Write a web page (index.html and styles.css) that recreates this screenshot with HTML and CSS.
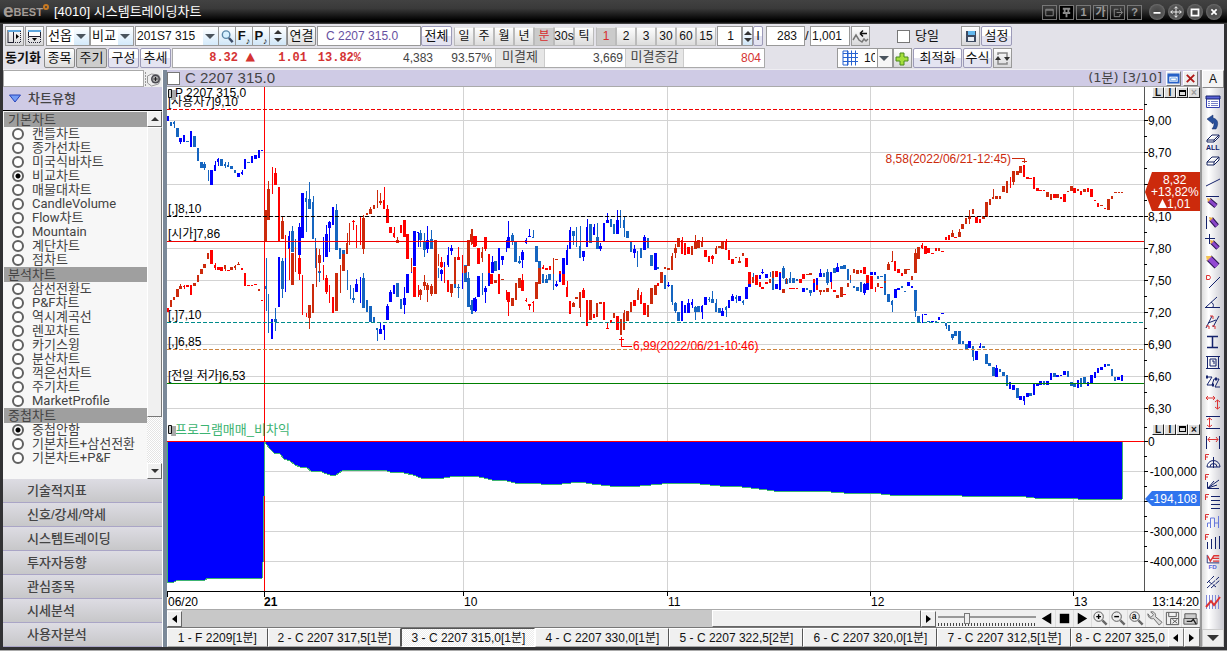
FILE: index.html
```html
<!DOCTYPE html>
<html lang="ko">
<head>
<meta charset="utf-8">
<title>[4010] 시스템트레이딩차트</title>
<link rel="stylesheet" href="styles.css">
</head>
<body>
<div class="window">
<header class="titlebar">
  <span class="brand"><b class="brand-e">e</b>BEST<i class="brand-dot"></i></span>
  <h1>[4010] 시스템트레이딩차트</h1>
  <div class="sysbtns">
    <button aria-label="창"><svg viewBox="0 0 14 14"><path d="M3 3.5h8v7H3zM3 4.5h8"/></svg></button>
    <button aria-label="고정" class="dark"><svg viewBox="0 0 14 14"><path d="M3 3h8M3 7.500h8M5 3v4M9 3v4M7 7v5" stroke-width="2"/></svg></button>
    <button>1</button><button>가</button>
    <button aria-label="내보내기"><svg viewBox="0 0 14 14"><path d="M8 3.500H3.500v8H9.500V9M6 7h6M10 4.500L12.500 7L10 9.500M10.500 2v3"/></svg></button>
    <button>?</button>
  </div>
  <div class="winbtns">
    <button aria-label="최소화"><svg viewBox="0 0 16 16"><path d="M4 9h8" stroke-width="2"/></svg></button>
    <button aria-label="이동"><svg viewBox="0 0 16 16"><path d="M8 2v12M2 8h12M6 4l2-2 2 2M6 12l2 2 2-2M4 6L2 8l2 2M12 6l2 2-2 2"/></svg></button>
    <button aria-label="최대화"><svg viewBox="0 0 16 16"><path d="M4 5h8v7H4z" stroke-width="2"/></svg></button>
    <button aria-label="닫기"><svg viewBox="0 0 16 16"><path d="M5 5l6 6M11 5l-6 6" stroke-width="2"/></svg></button>
  </div>
</header>

<section class="toolbars">
  <div class="bar">
    <button class="icon" aria-label="왼쪽 패널"><svg viewBox="0 0 17 17"><path d="M2 2.500h13M2 2v13M2 14.500h6M7.500 3v11" stroke="#223" /><path d="M2 2h13v2H2z" fill="#5fa8df"/><path d="M9 14.500h6M14.500 3v12" stroke="#223" stroke-dasharray="1 1"/><path d="M10 6l3 2.500-3 2.500z"/></svg></button>
    <button class="icon" aria-label="위쪽 패널"><svg viewBox="0 0 17 17"><path d="M2.500 2.500h12v6h-12z" stroke="#223" fill="#fff"/><path d="M2 2h13v2H2z" fill="#5fa8df"/><path d="M2.500 9v5.500h12V9" stroke="#223" fill="none" stroke-dasharray="1 1"/><path d="M6 10h5l-2.500 3z"/></svg></button>
    <span class="combo combo-first"><select aria-label="상품"><option>선옵</option></select></span>
    <span class="combo"><select aria-label="차트"><option>비교</option></select></span>
    <span class="combo combo-code"><select aria-label="종목코드"><option>201S7 315</option></select></span>
    <button class="sky" aria-label="검색"><svg viewBox="0 0 16 18"><circle cx="6.500" cy="7" r="4" fill="#d6f0ff" stroke="#5b87a8" stroke-width="1.500"/><path d="M9.500 10.500l4 4.500" stroke="#3c4b66" stroke-width="2.500"/></svg></button>
    <button class="sky letter">F<small>♪</small></button>
    <button class="sky letter">P<small>♪</small></button>
    <button class="sky updown" aria-label="위아래"><i class="up"></i><i class="down"></i></button>
    <button class="btn grey-edge w29">연결</button>
    <input class="field name" aria-label="종목명" value="C 2207 315.0">
    <button class="btn w31">전체</button>
    <div class="group">
      <button>일</button><button>주</button><button>월</button><button>년</button><button class="on">분</button><button>30s</button><button>틱</button>
    </div>
    <div class="group nums">
      <button class="on">1</button><button>2</button><button>3</button><button>30</button><button>60</button><button>15</button>
    </div>
    <input class="field num1" aria-label="주기" value="1">
    <button class="sky updown narrow" aria-label="주기 조절"><i class="up"></i><i class="down"></i></button>
    <button class="btn tiny">I</button>
    <input class="field num2" aria-label="조회" value="283"><span class="slash">/</span><input class="field num3" aria-label="전체" value="1,001">
    <button class="icon" aria-label="연장"><svg viewBox="0 0 17 17"><path d="M1 12l3-5 3 5 3 2 2-3 2 2 2-2" fill="none" stroke="#777" stroke-width="1.500"/><path d="M8 5.500h7M8 5.500l3-3M8 5.500l3 3" stroke="#111" fill="none" stroke-width="1.500"/></svg></button>
    <label class="check"><input type="checkbox">당일</label>
    <button class="icon" aria-label="저장"><svg viewBox="0 0 17 17"><path d="M4 3h10v11H4z" fill="#3d4a60"/><path d="M6 3h7v4H6z" fill="#62b8ed"/><path d="M6 9h6v4H6z" fill="#e8edf3"/></svg></button>
    <button class="btn w31">설정</button>
  </div>
  <div class="bar">
    <strong class="sync">동기화</strong>
    <button class="btn grey-edge w31">종목</button><button class="btn pressed w31">주기</button><button class="btn w31">구성</button><button class="btn w31">추세</button>
    <div class="quote">
      <b class="q-price">8.32</b><b class="q-tri">▲</b><b class="q-diff">1.01</b><b class="q-rate">13.82%</b>
      <span class="q-vol">4,383</span><span class="q-pct">93.57%</span><span class="q-head oi">미결제</span><span class="q-oi">3,669</span><span class="q-head">미결증감</span><span class="q-chg">804</span>
    </div>
    <span class="combo gridbox"><svg viewBox="0 0 16 16"><path d="M1 1h5v14H1z" fill="#fff" stroke="#2862d0"/><path d="M5.500.5v15M9.500.5v15M13.500.5v15M1 3.500h15M1 7.500h15M1 11.500h15" stroke="#2862d0" fill="none"/></svg><select aria-label="격자"><option>10</option></select></span>
    <button class="icon plus" aria-label="추가"><svg viewBox="0 0 17 17"><path d="M6 3h4v4h4v4h-4v4H6v-4H2V7h4z" fill="#a5df3c" stroke="#4a8a1d"/></svg></button>
    <button class="btn w48">최적화</button><button class="btn w29">수식</button>
    <button class="icon" aria-label="새로고침"><svg viewBox="0 0 17 17"><path d="M4 5V3h9v6M4 9v5h9v-2" fill="none" stroke="#888" stroke-width="1.500"/><path d="M10 7h6l-3 4zM1 10h6L4 6z" fill="#333"/></svg></button>
  </div>
</section>

<main class="workspace">
<aside class="sidebar">
  <div class="search"><input aria-label="차트 검색"><button aria-label="찾기"><svg viewBox="0 0 17 16"><path d="M1 1v14" stroke="#999" stroke-dasharray="2 1"/><path d="M3 5l4-2 7 1 2 4-2 5-7 2-4-3z" fill="#eee" stroke="#999"/><circle cx="11" cy="8" r="4.500" fill="#4a4a50"/><circle cx="11" cy="8" r="3" fill="#aaa"/><path d="M11 6v4M9 8h4" stroke="#222"/></svg></button></div>
  <h2 class="open"><svg viewBox="0 0 12 9"><path d="M.5 1h11L6 8z" fill="#739cf5" stroke="#2742b8"/></svg>차트유형</h2>
  <div class="list-wrap">
    <div class="list">
      <h3>기본차트</h3>
      <label><input type="radio" name="basic">캔들차트</label>
      <label><input type="radio" name="basic">종가선차트</label>
      <label><input type="radio" name="basic">미국식바차트</label>
      <label><input type="radio" name="basic" checked>비교차트</label>
      <label><input type="radio" name="basic">매물대차트</label>
      <label><input type="radio" name="basic">CandleVolume</label>
      <label><input type="radio" name="basic">Flow차트</label>
      <label><input type="radio" name="basic">Mountain</label>
      <label><input type="radio" name="basic">계단차트</label>
      <label><input type="radio" name="basic">점차트</label>
      <h3>분석차트</h3>
      <label><input type="radio" name="basic">삼선전환도</label>
      <label><input type="radio" name="basic">P&amp;F차트</label>
      <label><input type="radio" name="basic">역시계곡선</label>
      <label><input type="radio" name="basic">렌꼬차트</label>
      <label><input type="radio" name="basic">카기스윙</label>
      <label><input type="radio" name="basic">분산차트</label>
      <label><input type="radio" name="basic">꺽은선차트</label>
      <label><input type="radio" name="basic">주기차트</label>
      <label><input type="radio" name="basic">MarketProfile</label>
      <h3>중첩차트</h3>
      <label><input type="radio" name="overlay" checked>중첩안함</label>
      <label><input type="radio" name="overlay">기본차트+삼선전환</label>
      <label><input type="radio" name="overlay">기본차트+P&amp;F</label>
    </div>
    <div class="vscroll"><button aria-label="위로"><i class="up"></i></button><span class="vthumb"></span><button aria-label="아래로"><i class="down"></i></button></div>
  </div>
  <nav class="sections">
    <button>기술적지표</button><button>신호/강세/약세</button><button>시스템트레이딩</button><button>투자자동향</button><button>관심종목</button><button>시세분석</button><button>사용자분석</button>
  </nav>
</aside>

<section class="chart">
  <div class="chart-head">
    <input type="checkbox" aria-label="선택"><h2>C 2207 315.0</h2><span class="count">(1분) [3/10]</span>
    <button aria-label="창 크기"><svg viewBox="0 0 14 14"><path d="M1.500 2.500h11v9h-11z" fill="#fff" stroke="#2862c8" stroke-width="2"/><path d="M1 4h12" stroke="#2862c8" stroke-width="2"/><path d="M4 6.500h6v3H4z" fill="none" stroke="#6aa2e6"/></svg></button>
    <button aria-label="닫기"><svg viewBox="0 0 14 14"><path d="M3 3l8 8M11 3l-8 8" stroke="#b01818" stroke-width="2"/></svg></button>
  </div>
  <div class="plot">
    <svg class="plot-svg" viewBox="167 87 1033 522" preserveAspectRatio="xMinYMin meet">
      <g stroke="#d3d3d3" shape-rendering="crispEdges">
        <path d="M167 120.500H1144M167 152.500H1144M167 184.500H1144M167 216.500H1144M167 248.500H1144M167 280.500H1144M167 312.500H1144M167 344.500H1144M167 376.500H1144M167 408.500H1144M167 471.500H1144M167 501.500H1144M167 531.500H1144M167 561.500H1144"/>
        <path d="M463.500 87V591M667.500 87V591M870.500 87V591M1073.500 87V591"/>
      </g>
      <path d="M264.500 87V591" stroke="#f00" shape-rendering="crispEdges"/>
      <g id="candles" shape-rendering="crispEdges"></g>
      <g shape-rendering="crispEdges">
        <path d="M167 109.500H1144" stroke="#f00000" stroke-dasharray="4 2"/>
        <path d="M167 216.500H1144" stroke="#000" stroke-dasharray="4 2"/>
        <path d="M167 241.500H1144" stroke="#f00000"/>
        <path d="M167 322.500H1144" stroke="#008b8b" stroke-dasharray="4 2"/>
        <path d="M167 349.500H1144" stroke="#cd853f" stroke-dasharray="4 2"/>
        <path d="M167 383.500H1144" stroke="#008000"/>
      </g>
      <path fill="#00f" stroke="#3cb371" shape-rendering="crispEdges" d="M167 441V582L174 582 178 580H199L201 581 205 580 208 578H262L263.500 555 264.500 441 266 444 270 449 274 453 280 454 284 459 290 461 295 465 300 467 307 468 311 471H320L324 473 330 475 336 475 342 471 352 470H384L390 472 404 473 413 475 421 478H444L456 476H474L484 478 492 480 507 481 515 483 530 483 541 484H562L580 482 592 484 610 486 640 486 662 484 682 483 700 484 720 486 742 487 759 489 774 491H818L844 493H872L890 495H934L962 496H1018L1034 498 1078 499 1104 500 1122 499V441z"/>
      <path d="M167 441.500H1144" stroke="#f00" shape-rendering="crispEdges"/>
      <g stroke="#000" shape-rendering="crispEdges">
        <path d="M1144.500 87V591" stroke="#555"/>
        <path d="M167 591.500H1200M167.500 591V597M264.500 591V597M463.500 591V596M667.500 591V596M870.500 591V596M1073.500 591V596"/>
        <path d="M1144 104.500h3M1144 120.500h4M1144 136.500h3M1144 152.500h4M1144 168.500h3M1144 184.500h4M1144 200.500h3M1144 216.500h4M1144 232.500h3M1144 248.500h4M1144 264.500h3M1144 280.500h4M1144 296.500h3M1144 312.500h4M1144 328.500h3M1144 344.500h4M1144 360.500h3M1144 376.500h4M1144 392.500h3M1144 408.500h4M1144 427.500h3M1144 441.500h4M1144 456.500h3M1144 471.500h4M1144 486.500h3M1144 501.500h4M1144 516.500h3M1144 531.500h4M1144 546.500h3M1144 561.500h4"/>
      </g>
      <g class="t">
        <text x="175" y="97">P 2207 315,0</text><text x="168" y="106">[사용자7]9,10</text>
        <text x="168" y="213">[,]8,10</text><text x="168" y="238">[시가]7,86</text><text x="168" y="319">[,]7,10</text><text x="168" y="346">[,]6,85</text><text x="168" y="380">[전일 저가]6,53</text>
        <text x="1148" y="125">9,00</text><text x="1148" y="157">8,70</text><text x="1148" y="221">8,10</text><text x="1148" y="253">7,80</text><text x="1148" y="285">7,50</text><text x="1148" y="317">7,20</text><text x="1148" y="349">6,90</text><text x="1148" y="381">6,60</text><text x="1148" y="413">6,30</text>
        <text x="1148" y="446">0</text>
        <g text-anchor="end"><text x="1197" y="476">-100,000</text><text x="1197" y="536">-300,000</text><text x="1197" y="566">-400,000</text><text x="1199" y="606">13:14:20</text></g>
        <text x="168" y="606">06/20</text><text x="264" y="606" font-weight="bold">21</text><text x="464" y="606">10</text><text x="668" y="606">11</text><text x="871" y="606">12</text><text x="1074" y="606">13</text>
        <text x="175" y="434" fill="#3cb371" class="ind">프로그램매매_비차익</text>
        <text x="633" y="350" fill="#f00">6,99(2022/06/21-10:46)</text><text x="1011" y="163" fill="#cc2a0c" text-anchor="end">8,58(2022/06/21-12:45)</text>
      </g>
      <path d="M621.500 337V346.500H632M619 339.500h5" stroke="#f00" fill="none"/><path d="M1012 158.500H1024.500V163M1022 161.500h5" stroke="#cc2a0c" fill="none"/>
      <path d="M172 90h4v10h-5z" fill="#aaa"/><path d="M168.500 89.500h3v8h-3z" fill="#ccc" stroke="#111"/>
      <path d="M172 426h4v10h-5z" fill="#aaa"/><path d="M168.500 425.500h3v8h-3z" fill="#ccc" stroke="#111"/>
      <path d="M1145 192L1152 172H1200V211H1152z" fill="#cc2a0c"/><path d="M1145 499L1152 491H1200V506H1152z" fill="#2f74ee"/>
      <g class="t"><text x="1163" y="184" fill="#fff">8,32</text><text x="1151" y="196" fill="#fff">+13,82%</text><text x="1167" y="208" fill="#fff">1,01</text><text x="1197" y="503" text-anchor="end" fill="#fff">-194,108</text></g>
      <path d="M1158 208l4.500-9 4.500 9z" fill="#fff"/>
    </svg>
    <div class="pane-btns upper"><button>L</button><button>I</button><button aria-label="최대화"><i class="box"></i></button><button class="off">×</button></div>
    <div class="pane-btns lower"><button>L</button><button>I</button><button aria-label="최대화"><i class="box"></i></button><button>×</button></div>
  </div>
  <div class="scrollrow">
    <button class="raised" aria-label="왼쪽"><i class="left"></i></button><span class="track"></span><span class="hthumb"></span><button class="raised" aria-label="오른쪽"><i class="right"></i></button>
    <input type="range" aria-label="확대 비율" min="0" max="100" value="28">
    <div class="playback">
      <button aria-label="뒤로"><svg viewBox="0 0 18 18"><path d="M14 3v12L4 9z"/></svg></button><button aria-label="정지"><svg viewBox="0 0 18 18"><path d="M4 4h10v10H4z"/></svg></button><button aria-label="재생"><svg viewBox="0 0 18 18"><path d="M4 3v12l10-6z"/></svg></button>
      <button aria-label="확대"><svg viewBox="0 0 18 18"><circle cx="7" cy="7" r="5" fill="#eee" stroke="#555"/><path d="M4.500 7h5M7 4.500v5" stroke="#000" stroke-width="1.500"/><path d="M11 11l4.500 4.500" stroke="#666" stroke-width="2.500"/></svg></button>
      <button aria-label="축소"><svg viewBox="0 0 18 18"><circle cx="7" cy="7" r="5" fill="#eee" stroke="#555"/><path d="M4.500 7h5" stroke="#000" stroke-width="1.500"/><path d="M11 11l4.500 4.500" stroke="#666" stroke-width="2.500"/></svg></button>
      <button aria-label="전체 보기"><svg viewBox="0 0 18 18"><circle cx="7" cy="7" r="5" fill="#eee" stroke="#555"/><text x="4" y="10" font-size="9" font-weight="bold" font-family="Liberation Sans">a</text><path d="M11 11l4.500 4.500" stroke="#666" stroke-width="2.500"/></svg></button>
      <button aria-label="도구"><svg viewBox="0 0 18 18"><path d="M2 4c0 4 3 6 6 5l6 7 3-3-7-6c1-3-2-6-5-5l3 3-3 3z" fill="#ddd" stroke="#666"/></svg></button>
      <button aria-label="저장"><svg viewBox="0 0 18 18"><path d="M2.500 2.500h13v13h-13zM5 3v4h8V3M7 15V9h8M9 10l5 4M14 10l-5 4" fill="none" stroke="#555"/></svg></button>
      <button aria-label="인쇄"><svg viewBox="0 0 18 18"><path d="M3 4h12v5H3zM2 9h14v6H2z" fill="#ccc" stroke="#555"/><path d="M5 12h5l2-2 3 5" fill="none" stroke="#222" stroke-width="1.500"/></svg></button>
    </div>
  </div>
  <div class="tabs">
    <button class="first">1 - F 2209[1분]</button><button>2 - C 2207 317,5[1분]</button><button class="active">3 - C 2207 315,0[1분]</button><button>4 - C 2207 330,0[1분]</button><button>5 - C 2207 322,5[2분]</button><button>6 - C 2207 320,0[1분]</button><button>7 - C 2207 312,5[1분]</button><button class="last">8 - C 2207 325,0</button>
    <button class="arrow" aria-label="이전"><i class="left"></i></button><button class="arrow" aria-label="다음"><i class="right"></i></button>
  </div>
</section>

<div class="tools">
  <button class="a">A</button>
  <button aria-label="목록"><svg viewBox="0 0 16 16"><path d="M1.500 2.500h13v11h-13z" fill="#fff" stroke="#3540b0"/><path d="M1 2h14v3H1z" fill="#5961d8"/><path d="M3 7.500h2M3 9.500h2M3 11.500h2M6 7.500h7M6 9.500h7M6 11.500h7" stroke="#7780c8"/></svg></button>
  <button aria-label="되돌리기"><svg viewBox="0 0 16 16"><path d="M2 5l6-4v3c5 1 6 6 3 11H7c3-4 2-6 1-7v2z" fill="#29509b" stroke="#172b64" stroke-width=".5"/></svg></button>
  <button aria-label="모두 지우기"><svg viewBox="0 0 16 16"><path d="M2 6l5-5h7v2L9 8H2zM2 6h7l5-5M9 6v2" fill="#fff" stroke="#14225e"/><text x="1" y="16" font-size="7" font-weight="bold" fill="#14226b" font-family="Liberation Sans">ALL</text></svg></button>
  <button aria-label="지우기"><svg viewBox="0 0 16 16"><path d="M2 8l5-5h7v3l-5 5H2zM2 8h7l5-5M9 8v3" fill="#fff" stroke="#14225e"/></svg></button>
  <button aria-label="추세선"><svg viewBox="0 0 16 16"><path d="M1 12L15 5"/></svg></button>
  <button aria-label="수평선"><svg viewBox="0 0 16 16"><path d="M1 2.500h13"/><path d="M4 6l7 6" stroke="#28134f" stroke-width="5"/><path d="M4 6l7 6" stroke="#8a45c8" stroke-width="3"/><path d="M2 4l4 1-3 3z" fill="#f0b040" stroke="none"/></svg></button>
  <button aria-label="수직선"><svg viewBox="0 0 16 16"><path d="M1.500 2v13"/><path d="M6 5l6 7" stroke="#28134f" stroke-width="5"/><path d="M6 5l6 7" stroke="#8a45c8" stroke-width="3"/><path d="M4 3l4 1-3 3z" fill="#f0b040" stroke="none"/></svg></button>
  <button aria-label="십자선"><svg viewBox="0 0 16 16"><path d="M0 4.500h10M4.500 0v10"/><path d="M7 8l6 6" stroke="#28134f" stroke-width="5"/><path d="M7 8l6 6" stroke="#8a45c8" stroke-width="3"/><path d="M5 6l4 1-3 3z" fill="#f0b040" stroke="none"/></svg></button>
  <button aria-label="연필"><svg viewBox="0 0 16 16"><path d="M4 4l8 8" stroke="#28134f" stroke-width="7"/><path d="M4 4l8 8" stroke="#9347d2" stroke-width="5"/><path d="M1 2h6L2 7z" fill="#f5c452" stroke="none"/></svg></button>
  <button aria-label="직선"><svg viewBox="0 0 16 16"><path d="M4 14L15 3"/><path d="M1.500 1.500h3l1 2-1 2h-3z" stroke="#d33"/></svg></button>
  <button aria-label="각도"><svg viewBox="0 0 16 16"><path d="M0 13.500h15M1 13L12 3M6 8c2 1 3 3 2 5"/></svg></button>
  <button aria-label="평행선"><svg viewBox="0 0 16 16"><path d="M1 14L7 2M8 13l6-11M3 9l8-3"/><path d="M5 2h3v3M1 12h3v3M7 12h3v3" stroke="#d33"/></svg></button>
  <button aria-label="간격"><svg viewBox="0 0 16 16"><path d="M2 2.500h11M2 13.500h11M7.500 2v12" stroke-width="1.500"/></svg></button>
  <button aria-label="사각형"><svg viewBox="0 0 16 16"><path d="M1 2.500h14M1 14.500h14M2.500 2v12M13.500 2v12M5 5h6v7H5zM7 7h2v3"/></svg></button>
  <button aria-label="파동"><svg viewBox="0 0 16 16"><path d="M1 3h6L2 11h5l2-6h5l-4 8h5"/><path d="M1 3h2M10 5h2M7 11h2" stroke-width="3"/></svg></button>
  <button class="red" aria-label="화살표"><svg viewBox="0 0 16 16"><path d="M1 4h9M3 2L1 4l2 2M8 2l2 2-2 2M12.500 6v9M10 8l2.500-2L15 8M10 13l2.500 2 2.500-2"/></svg></button>
  <button aria-label="높이"><svg viewBox="0 0 16 16"><path d="M1 2.500h14M1 14.500h14"/><path d="M4.500 4v9M2 6l2.500-2L7 6M2 11l2.500 2L7 11" stroke="#d33"/></svg></button>
  <button aria-label="너비"><svg viewBox="0 0 16 16"><path d="M1.500 2v13M14.500 2v13"/><path d="M3 5.500h10M5 3L3 5.500 5 8M11 3l2 2.500L11 8" stroke="#d33"/></svg></button>
  <button aria-label="피보나치 원"><svg viewBox="0 0 16 16"><path d="M2 13a6 6 0 0 1 13 0zM5 13a3 3 0 0 1 7 0M8.500 3v11"/><path d="M.5 6V.5H4M.5 3H3" stroke="#d33"/></svg></button>
  <button aria-label="피보나치 팬"><svg viewBox="0 0 16 16"><path d="M2.500 8v6.500H14M3 14l11-8M3 14l9-3M3 14l6-7"/><path d="M.5 6V.5H4M.5 3H3" stroke="#d33"/></svg></button>
  <button aria-label="피보나치 되돌림"><svg viewBox="0 0 16 16"><path d="M6 2.500h9M6 6.500h9M6 10.500h9M6 14.500h9"/><path d="M.5 6V.5H4M.5 3H3" stroke="#d33"/></svg></button>
  <button aria-label="피보나치 파동"><svg viewBox="0 0 16 16"><path d="M2.500 13V9h3v5M5.500 12V4h4v9M9.500 9h4v5M13.500 9V2" stroke="#6678dc"/><path d="M.5 6V.5H4M.5 3H3" stroke="#d33"/></svg></button>
  <button aria-label="피보나치 시간"><svg viewBox="0 0 16 16"><path d="M2.500 8v7M6.500 5v10M10.500 3v12M14.500 2v13"/><path d="M.5 6V.5H4M.5 3H3" stroke="#d33"/></svg></button>
  <button aria-label="FD"><svg viewBox="0 0 16 18"><path d="M1.500 1v9H15"/><path d="M2 2l3 6 4-6h6M8 5h7M8 8h7" stroke="#d33" stroke-width="1.500"/><text x="3" y="17" font-size="7" fill="#5565dd" font-family="Liberation Sans" font-weight="bold">FD</text></svg></button>
  <button aria-label="채널"><svg viewBox="0 0 16 16"><path d="M2 9L9 2M2 14L14 3M6 14l9-8M3 7l8 6" stroke-dasharray="5 1"/></svg></button>
  <button aria-label="추세 파동"><svg viewBox="0 0 16 16"><path d="M1.500 1v14M4.500 1v14M7.500 1v14M10.500 1v14M13.500 1v14" stroke="#8088d8"/><path d="M1 13l5-6 3 4 6-8" stroke="#d33" stroke-width="2"/></svg></button>
  <button class="more" aria-label="더 보기"><i class="down"></i></button>
</div>
</main>
</div>
<script src="chart.js"></script>
</body>
</html>
```
FILE: styles.css
```css
* { box-sizing: border-box; }
html, body { height: 100%; }
body { margin: 0; font: 13px/16px "Liberation Sans", "Noto Sans CJK KR", sans-serif; color: #111; overflow: hidden; }
button, input, select { font: inherit; color: inherit; margin: 0; padding: 0; border-radius: 0; }
button { display: flex; align-items: center; justify-content: center; white-space: nowrap; border: 0; background: none; }
h1, h2, h3 { margin: 0; font-size: 13px; font-weight: normal; }
svg { display: block; }
.window { height: 100vh; display: flex; flex-direction: column; padding: 0 3px 3px; background: #323234; border-bottom: 1px solid #aaa; }

.titlebar { flex: none; height: 24px; margin: 0 -3px; padding: 0 5px 0 3px; display: flex; align-items: center; background: linear-gradient(#424242 0, #3a3a3a 35%, #000 85%, #000 92%, #555 100%); color: #fff; }
.brand { display: flex; align-items: center; width: 51px; color: #a39b96; font-weight: bold; font-size: 11px; }
.brand-e { font-size: 19px; line-height: 18px; margin-bottom: 3px; }
.brand-dot { flex: none; width: 6px; height: 6px; border: 2px solid #c87922; border-radius: 50%; margin-bottom: 11px; }
.titlebar h1 { flex: 1; }
.sysbtns { display: flex; gap: 2px; margin-right: 7px; }
.sysbtns button { width: 15px; height: 15px; border: 1px solid #777; color: #999; font-size: 11px; font-weight: bold; line-height: 12px; }
.sysbtns svg { width: 13px; height: 13px; fill: none; stroke: #8b8b8b; }
.sysbtns .dark { background: #000; }
.winbtns { display: flex; gap: 3px; }
.winbtns button { width: 16px; height: 16px; border-radius: 50%; background: radial-gradient(#444, #555 55%, #999); }
.winbtns svg { width: 14px; height: 14px; fill: none; stroke: #fff; }

.toolbars { flex: none; background: #e3e2e9; padding: 1px 0 0 2px; border-bottom: 1px solid #eeedf2; }
.bar { display: flex; align-items: center; height: 22px; }
.bar > * { flex: none; }
.icon { width: 19px; height: 20px; border: 1px solid #999; background: linear-gradient(#fff, #d8d8da); margin-right: 1px; }
.icon svg { width: 17px; height: 17px; }
.btn { height: 20px; border: 1px solid #9c9ab8; border-radius: 2px; background: linear-gradient(#fff 50%, #e4e4f1 50%); margin-right: 1px; }
.w29 { width: 29px; } .w31 { width: 31px; } .w48 { width: 49px; }
.grey-edge { border-color: #8a8a8a; background: linear-gradient(#fff, #ddd); }
.pressed { border-color: #888; background: #cdcdcd; }
.tiny { width: 10px; }
.combo { position: relative; display: flex; height: 20px; width: 44px; background: #fff; border: 1px solid #999; }
.combo-first { margin-left: 1px; }
.combo select { appearance: none; border: 0; width: 100%; background: linear-gradient(#fff, #d4eafb) right / 15px 100% no-repeat; padding: 0 16px 1px 1px; outline: 0; }
.combo::after { content: ""; position: absolute; right: 3px; top: 7px; border: 5px solid transparent; border-top-color: #4a545d; border-bottom: 0; pointer-events: none; }
.combo-code { width: 84px; margin-left: 1px; }
.combo-code select { font-size: 12px; }
.sky { width: 17px; height: 20px; border: 1px solid #999; border-left: 0; background: linear-gradient(#fff, #d0e6f7); }
.sky svg { width: 15px; height: 17px; }
.letter { font-weight: bold; }
.letter small { font-size: 9px; line-height: 8px; align-self: flex-end; }
.updown { flex-direction: column; gap: 4px; }
.narrow { width: 11px; border-left: 1px solid #999; gap: 3px; }
i.up, i.down, i.left, i.right { display: block; border: 4px solid transparent; }
i.up { border-bottom-color: #333; border-top: 0; }
i.down { border-top-color: #333; border-bottom: 0; }
i.left { border-right: 5px solid #000; border-left: 0; }
i.right { border-left: 5px solid #000; border-right: 0; }
.field { height: 20px; border: 1px solid #999; background: #fff; font-size: 12px; outline: 0; }
.name { width: 104px; padding-left: 8px; color: #6650a0; }
.group { display: flex; margin-left: 1px; }
.group button { width: 20px; height: 19px; border: 1px solid #bbb; border-top-color: #e6e6e6; background: linear-gradient(#fdfdfd, #dcdcdc); font-size: 12px; }
.group .on { background: #cbcbcb; color: #d82c2c; }
.nums { margin: 0 1px 0 2px; }
.num1 { width: 25px; text-align: right; padding-right: 7px; }
.num2 { width: 39px; text-align: right; padding-right: 7px; margin-left: 2px; }
.num3 { width: 40px; padding-left: 1px; margin-right: 1px; }
.slash { width: 5px; }
.check { display: flex; align-items: center; gap: 5px; width: 90px; padding-left: 26px; }
input[type="checkbox"] { appearance: none; width: 13px; height: 13px; background: #fff; border: 1px solid #777; }
.sync { width: 39px; white-space: nowrap; }
.quote { display: flex; align-items: center; width: 593px; height: 20px; margin-right: 72px; padding-right: 3px; border: 1px solid #aaa; background: #fff; color: #444; font-size: 12px; text-align: right; }
.quote b { color: #d43333; font: bold 12px "Liberation Mono", monospace; }
.q-price { width: 65px; } .quote .q-tri { width: 17px; font-size: 16px; line-height: 16px; } .q-diff { width: 52px; } .q-rate { width: 54px; }
.q-vol { width: 72px; } .q-pct { width: 60px; padding-right: 1px; }
.q-head { height: 18px; width: 59px; font-size: 13px; text-align: center; background: #e6e6e6; border: 1px solid #ccc; border-width: 0 1px; }
.oi { width: 50px; margin-left: 2px; }
.q-oi { width: 80px; padding-right: 2px; }
.q-chg { flex: 1; color: #d43333; }
.gridbox { width: 56px; align-items: center; padding-left: 4px; }
.gridbox svg { flex: none; width: 16px; height: 16px; }
.gridbox select { background: linear-gradient(90deg, #999 1px, #f6f6f6 1px) right / 15px 100% no-repeat; padding: 0 17px 0 6px; font-size: 12px; height: 18px; min-width: 0; }

.workspace { flex: 1; min-height: 0; display: grid; grid-template-columns: 160px minmax(0, 1fr) 22px; background: #f0f0f0; }
.sidebar { display: flex; flex-direction: column; min-height: 0; border-right: 1px solid #fff; color: #444; }
.search { flex: none; display: flex; height: 17px; background: #eee; }
.search input { flex: 1; min-width: 0; border: 1px solid #aaa; background: #fff; outline: 0; }
.search svg { width: 18px; height: 16px; }
.open { flex: none; display: flex; align-items: center; gap: 7px; height: 24px; padding-left: 6px; background: #cfcbe5; font-weight: 500; border-bottom: 1px solid #000; }
.open svg { width: 12px; height: 9px; }
.list-wrap { flex: 1; min-height: 0; display: flex; background: #f7f7f7; }
.list { flex: 1; overflow: hidden; padding: 1px 0 0 1px; font-family: Roboto, "Noto Sans CJK KR", sans-serif; }
.list h3 { height: 15px; line-height: 15px; padding-left: 4px; background: #9f9f9f; }
.list label { display: flex; align-items: center; height: 14px; gap: 8px; padding-left: 8px; line-height: 14px; white-space: nowrap; }
.list input { appearance: none; flex: none; width: 12px; height: 12px; border: 2px solid #606060; border-radius: 50%; background: #fff; }
.list input:checked { background: radial-gradient(#000 0 2px, #fff 3px); }
.vscroll { width: 15px; display: flex; flex-direction: column; justify-content: space-between; background: repeating-conic-gradient(#fff 0 25%, #e4e4e4 0 50%) 0 0 / 2px 2px; }
.vscroll button, .raised { flex: none; width: 15px; height: 16px; background: #f0f0f0; border: 1px solid; border-color: #fff #666 #666 #fff; }
.vthumb { height: 290px; margin-bottom: auto; background: #f0f0f0; border: 1px solid; border-color: #fff #777 #777 #fff; }
.sections { flex: none; }
.sections button { width: 100%; height: 24px; justify-content: flex-start; padding-left: 24px; background: linear-gradient(#dddce3, #c7c7c9); border-bottom: 1px solid #aaa5c6; font-weight: 500; }

.chart { display: flex; flex-direction: column; min-width: 0; min-height: 0; border-left: 4px solid #7b8999; border-right: 2px solid #999; background: #fff; }
.chart-head { flex: none; display: flex; align-items: center; height: 17px; background: #cfcbe5; border-bottom: 1px solid #aaa; color: #444; font-size: 15px; line-height: 16px; }
.chart-head h2 { flex: 1; margin-left: 5px; font-size: 15px; }
.count { margin-right: 4px; font-family: "DejaVu Sans", "Noto Sans CJK KR", sans-serif; font-size: 13px; }
.chart-head button { width: 15px; height: 15px; margin-right: 2px; background: #eee; border: 1px solid; border-color: #fff #777 #777 #fff; }
.chart-head svg { width: 13px; height: 13px; }
.plot { flex: 1; min-height: 0; position: relative; }
.plot-svg { width: 100%; height: 100%; }
.t { font: 12px "Liberation Sans", "Noto Sans CJK KR", sans-serif; }
.ind { font-size: 13px; }
.pane-btns { position: absolute; right: 0; display: flex; }
.pane-btns.upper { top: 0; } .pane-btns.lower { top: 64.5%; }
.pane-btns button { width: 12px; height: 11px; background: #ddd; border: 1px solid; border-color: #fff #222 #222 #fff; font-size: 10px; line-height: 9px; font-weight: bold; }
.pane-btns .off { color: #999; }
.box { width: 7px; height: 6px; border: 1px solid #000; border-top-width: 2px; }
.scrollrow { flex: none; display: flex; align-items: center; height: 19px; background: #f0f0f0; border-top: 1px solid #aaa; border-bottom: 1px solid #777; }
.track { flex: 530 1 0; height: 17px; background: #c8c8c8; }
.hthumb { flex: 207 1 0; height: 17px; background: #f0f0f0; border: 1px solid; border-color: #fff #666 #666 #fff; }
.scrollrow input { appearance: none; width: 98px; height: 15px; margin: 0 2px; background: linear-gradient(#999, #999) 0 5px / 100% 2px no-repeat, repeating-linear-gradient(90deg, #444 0 1px, transparent 1px 3px) 0 100% / 100% 3px no-repeat; }
.scrollrow input::-webkit-slider-thumb { appearance: none; width: 6px; height: 11px; background: #eee; border: 1px solid #777; }
.playback { display: flex; }
.playback button { width: 18px; height: 17px; border-right: 1px solid #ddd; }
.playback svg { width: 17px; height: 17px; }
.tabs { flex: none; display: flex; height: 19px; background: #f0f0f0; }
.tabs button { flex: 134 1 0; min-width: 0; overflow: hidden; font-size: 12px; border: 1px solid; border-color: #fff #555 #aaa #fff; }
.tabs .first { flex-grow: 100; }
.tabs .last { flex-grow: 97; border-right: 0; }
.tabs .active { border-color: #555 #fff #fff #555; background: repeating-conic-gradient(#fff 0 25%, #ececec 0 50%) 0 0 / 2px 2px; }
.tabs .arrow { flex: 0 0 16px; border-color: #fff #777 #777 #fff; }

.tools { display: flex; flex-direction: column; background: linear-gradient(90deg, #ddd, #fff 30%, #c9c9d0); }
.tools button { flex: none; width: 100%; height: 20px; }
.tools svg { width: 16px; height: 16px; fill: none; stroke: #14226b; }
.tools svg text { stroke: none; }
.tools .red svg { stroke: #d33; }
.tools .a { height: 18px; margin-bottom: 4px; background: #f4f4f4; border: 1px solid; border-color: #fff #888 #888 #fff; font-size: 12px; }
.tools .more { margin-top: auto; height: 18px; background: #eee; border: 1px solid #ccc; }
.tools .more i { border-width: 6px 6px 0; }
```
FILE: chart.js
```javascript
// Each candle: colour code, x, body top, body bottom [, wick top, wick bottom], in thirds of a pixel from the block origin.
// A zero body draws the wick only.
const colours = { b: '#0000ff', s: '#1565c0', r: '#ff0000', d: '#cc2a0c' };
const blocks = [
  { x: 165, y: 85, data: `b 8 93 108;s 18 110 123;s 27 110 117 108 129;s 37 129 156;b 47 160 172 158 177;b 57 150 171;s 68 168 170;b 78 138 186;s 88 152 186;s 99 189 228;s 109 231 248;s 119 237 250 231 256;s 129 0 0 255 288;b 139 255 299;b 150 240 258 228 258;b 159 222 231 218 243;s 170 222 243;s 180 238 244 230 250;s 189 240 246 232 246;s 200 243 253;s 210 254 264;b 221 264 276;b 231 262 266 255 270;b 240 222 252;s 250 231 234;b 261 213 235;b 271 210 222;b 282 196 219;b 291 195 198
r 8 670 682;d 18 645 667;d 27 635 645;d 37 612 636;d 47 604 612 597 612;r 57 604 607 600 612;r 68 600 606;r 78 600 630;d 88 593 603;d 99 570 591;d 109 552 567;d 119 537 549;d 129 504 522;r 139 495 537;r 150 540 550 534 555;r 160 546 556;r 170 545 558;d 180 541 552 539 558;r 190 555 558;d 200 546 555;d 210 543 549 539 555;d 221 537 540 530 540;r 231 549 555;r 240 564 603;r 250 600 603;r 261 600 603;r 271 597 600;d 282 612 618;r 291 645 648
s 303 604 612 519 678;s 311 0 0 627 745;b 321 702 762;s 331 702 712 668 738;b 342 516 666;s 352 528 612 520 640;b 362 0 0 520 620;b 372 452 492 438 492;s 382 438 500 423 500;s 392 0 0 462 520;b 403 426 510 414 510;b 413 324 460;s 423 340 350 318 440;s 433 342 372 291 372;s 444 350 462 333 462;s 452 0 0 460 550;s 463 558 564 505 592;b 474 0 0 455 530;b 484 447 516 420 516;b 494 410 430 408 500;b 504 366 420;s 515 375 495 357 495;s 525 490 522;s 536 495 508;s 546 0 0 555 616;s 555 0 0 600 642;s 565 640 645 610 655;b 575 598 620 583 620;b 586 0 0 576 655;s 596 579 669 564 669;s 606 645 682;s 617 663 710;s 627 696 713;s 636 729 735 729 767;b 647 732 747 714 747;b 657 720 735 720 765;b 667 663 705 657 705;b 676 620 650 615 650;b 687 600 628;s 697 594 636;s 708 642 672;b 718 640 660 606 687;b 727 567 624;b 738 0 0 530 565;b 748 438 543;b 759 441 444 441 486;s 767 444 465 435 486;s 778 471 495 444 516;b 788 464 492 423 505;s 799 462 492 435 492;s 811 0 0 470 560;s 819 0 0 548 580;b 829 555 567 552 588;b 839 0 0 530 595;b 849 510 540 486 545;b 859 490 497 480 510;s 870 515 610;s 880 605 610 597 640;b 891 0 0 565 612;s 901 540 590;s 911 579 665 560 665;s 921 657 670 645 686;b 928 640 678
d 302 375 471;d 311 312 405 288 405;r 321 0 0 246 326;r 331 263 300 249 300;r 342 306 468;d 352 408 462 393 462;r 362 0 0 450 520;r 372 0 0 490 585;d 382 504 600;d 392 0 0 486 560;r 403 519 567 510 585;r 413 0 0 570 690;r 423 0 0 684 696;d 433 660 700 660 732;d 444 597 684;d 454 0 0 490 606;d 463 510 535 492 560;r 474 0 0 540 585;r 484 580 622 570 628;r 494 0 0 600 655;r 504 636 684;d 515 564 678;d 525 0 0 540 625;d 536 508 558;d 546 473 508 444 508;d 554 0 0 414 480;r 565 408 412 404 435;r 575 0 0 420 488;r 586 0 0 396 480;d 596 399 492 390 507;d 606 384 390;d 617 372 386 366 386;d 627 360 372;d 636 0 0 315 370;d 647 348 354 324 360;r 657 346 372 306 372;r 667 372 415 360 415;r 676 426 444;r 687 444 456 426 460;d 697 465 474 456 474;r 708 420 444;r 718 405 455;r 727 447 522;d 738 0 0 520 560;r 748 546 636;r 759 0 0 600 636;d 767 615 630 612 645;d 778 591 603 570 615;d 788 600 615 594 651;d 799 603 628 596 632;d 811 465 627;d 819 0 0 508 542;r 829 530 545 515 550;r 839 0 0 545 595;r 849 585 620;d 859 597 624 597 636;d 870 515 597;r 880 515 525 486 525;r 891 0 0 510 565;d 901 543 560;d 911 465 543;d 921 462 478 432 478;r 928 453 485` },
  { x: 465, y: 140, data: `s 10 414 498 396 501;s 20 496 510 480 522;b 31 477 513 471 516;b 41 408 471;s 51 0 0 400 465;b 61 444 456 438 489;b 72 390 438;b 82 365 400 348 400;s 92 363 393;b 102 325 390;b 112 348 360 348 375;b 123 0 0 300 335;b 131 290 324 243 324;s 142 285 303 279 315;s 152 305 366;s 163 362 368 348 372;b 173 336 360 330 384;b 183 300 310 294 312;b 194 288 291 267 291;s 204 291 294 270 294;s 214 318 366;s 224 363 384;s 234 402 430;s 245 417 429 405 429;s 254 402 420;s 265 0 0 390 450;b 274 432 438 423 441;b 285 402 426;b 295 354 402;b 306 330 375 315 375;b 315 270 327 261 327;s 325 273 288 273 315;s 335 0 0 261 320;s 345 318 354 258 354;b 356 333 350 333 363;b 366 262 321 237 321;s 377 252 308;b 387 260 285 252 285;s 397 290 327 249 327;b 407 318 327 309 333;b 417 249 303;b 427 240 249 219 249;s 438 237 261;s 447 252 282;b 457 240 282 210 282;s 466 0 0 210 264;s 477 240 264 231 290;s 488 273 294;s 498 306 335;b 508 327 340 315 354;s 517 0 0 333 381;s 528 325 355;b 538 291 330 285 330;s 549 294 324;s 560 345 378;b 571 338 390;s 579 381 387;s 589 395 430;s 600 405 447;b 611 435 438 426 441;s 621 435 486 435 496;s 631 489 513 486 520;s 641 515 543;b 651 483 543;b 660 494 520;b 671 490 520 478 520;b 681 486 495 477 504;s 691 500 515 498 540;s 701 498 516;b 711 498 515 495 537;b 721 471 495;s 732 477 480 471 486;s 742 477 490 453 490;s 753 490 515 477 515;s 763 505 518;b 773 513 528 504 528;s 783 500 510 498 531;b 792 480 504;b 803 468 483 463 483;s 813 470 477 465 490;b 824 468 483;s 834 483 488 480 495;b 844 441 477;b 854 426 441;s 864 0 0 400 430;b 875 410 430;b 885 405 417;b 893 397 400 387 403;b 905 402 414;s 915 0 0 396 410;s 924 400 450
d 0 378 399;d 10 300 378;d 20 283 307 267 315;r 31 288 318;r 41 324 372;d 51 336 354 321 366;r 61 291 327 291 333;r 72 342 400;r 80 402 432;d 92 420 429;r 102 402 462;d 112 417 420;r 123 0 0 450 480;r 131 456 486 456 528;d 142 474 498;d 153 429 480;d 163 415 445;r 173 420 453 402 453;r 183 480 484 474 486;r 194 492 498 492 510;r 204 486 490 483 516;d 214 426 477;d 224 384 432;r 234 381 387 375 387;r 244 384 390;r 255 378 390;d 264 0 0 355 402;d 275 357 360;r 285 393 402;r 295 402 435;r 306 440 470 423 470;r 315 483 522;d 325 490 500 486 500;d 335 471 477;d 345 456 504 456 531;r 356 450 474 444 474;r 366 480 558;d 377 480 540;r 387 522 535;d 396 489 530;d 407 486 492;r 417 486 540;r 427 564 567 549 567;r 438 540 549;d 447 519 535;r 457 528 570;d 468 537 585;d 477 520 570 511 570;d 488 513 543;d 498 486 516;r 508 480 498;d 519 450 480 444 480;r 528 465 492 456 492;r 538 489 525;d 549 495 530;d 560 444 492;d 571 435 465;r 579 429 438;d 589 396 429;d 600 381 387;d 611 384 390;d 621 348 390 339 390;d 631 324 340 312 354;d 641 294 321;r 651 300 342 291 342;r 660 310 345;r 671 320 342;d 681 318 345;d 692 305 326 285 326;d 701 300 325;d 711 305 320 291 320;r 721 330 351;r 732 348 366;r 742 348 357 345 372;d 753 325 342 318 342;d 763 318 325;d 773 306 328;r 783 304 330 297 330;r 792 330 360;r 803 357 372;d 813 351 354;d 824 363 369 351 369;d 834 339 348;r 844 354 381;r 854 396 432;d 864 410 430;r 875 405 435;r 885 426 440;r 893 441 447;r 905 426 432;d 915 417 430;d 924 393 414` },
  { x: 765, y: 140, data: `b 34 432 446;b 45 396 450;s 55 384 414 378 417;s 65 417 432;s 75 414 430 396 430;s 86 414 430;s 96 418 424;s 106 424 430;b 116 444 455;s 126 444 450;s 137 450 460 450 468;b 147 430 455;b 156 414 435;b 167 398 411 386 411;s 177 398 411;s 187 396 430 387 435;b 198 396 426;s 208 384 400;b 218 381 395 369 395;s 229 378 387;s 238 375 387;s 249 387 420;s 257 0 0 405 430;s 267 438 444;s 278 440 453;s 288 425 455;b 298 432 459 429 465;b 308 420 450;b 320 396 406;b 330 396 405;s 339 408 416;s 349 408 411;s 360 402 465;s 371 462 486;s 381 483 495 480 516;b 391 447 474;b 401 444 450;s 411 438 445;s 420 453 456;b 431 426 438;b 441 438 444;s 451 450 513 450 531;s 461 528 546;b 471 0 0 522 548;b 481 522 525;s 491 543 546;b 503 543 546;s 513 543 546;b 522 531 541;b 532 519 522;s 543 549 558 549 567;s 552 555 572;s 563 582 593 582 600;s 572 573 588;s 583 573 612;s 594 602 612;s 604 612 627;b 614 603 624;s 624 618 650 618 663;b 634 633 660;b 645 617 623 609 623;s 655 618 623;s 665 642 672;s 674 668 678;s 685 681 708;b 695 685 710 675 710;s 705 687 696;s 715 696 708;s 726 705 738;b 735 726 746;b 745 735 750;s 757 744 774;b 767 768 780;b 777 768 782 768 795;b 787 759 771;s 797 759 768;b 807 732 765;b 817 732 738;b 827 723 735;s 837 723 735;b 847 723 735;b 858 699 720;s 868 700 712;b 878 706 712;b 888 705 708;b 898 693 706;s 909 693 711;s 919 726 738;s 929 730 742;b 939 720 744;s 948 714 740;s 958 711 730;b 969 726 738;b 980 705 732;b 990 696 714;b 999 684 699;b 1009 681 690;b 1020 672 680;s 1031 672 678;s 1041 687 708;s 1050 711 722;b 1061 711 720;b 1071 705 722
r 34 393 410;r 45 395 400;d 55 447 459;d 65 0 0 415 432;r 76 444 447;r 86 444 447;r 96 444 447;r 106 417 430;r 116 402 416;d 127 402 405;d 137 399 405;r 147 417 429;r 156 435 450;d 167 450 456 450 465;d 177 450 455;d 187 444 456;r 198 0 0 426 446;r 208 450 457;d 218 465 474;d 229 440 470;r 238 462 465;d 249 429 441;d 257 0 0 405 420;d 267 387 400;d 278 390 402;r 288 390 400;r 298 381 402;r 308 405 430;r 320 408 446;r 330 0 0 440 456;d 339 429 440;r 350 441 444;d 360 423 430;d 371 372 390 366 390;d 381 363 366 333 366;r 390 363 393;r 401 387 400;r 411 399 407;d 421 387 402;d 431 387 390;d 441 408 420;d 451 339 399 327 399;d 461 320 357;r 471 315 325 309 327;r 481 318 342;r 491 324 340;r 502 339 342;r 513 324 332;d 522 324 333;r 532 333 336;r 543 291 300;r 552 286 300;d 562 279 290 270 290;r 572 291 294;d 583 276 290 267 290;d 593 252 266;d 603 234 252;d 614 228 236 210 252;d 624 207 222;r 634 231 250;r 645 237 250;d 655 228 237;d 665 186 231;d 675 178 195;d 684 170 178 147 178;d 695 168 177;d 705 168 177;d 715 138 156;d 726 123 160;r 735 0 0 111 145;d 745 93 126 93 135;d 757 93 105;d 767 78 98;r 777 76 111;r 787 111 118;r 797 114 117;r 807 111 147;r 817 145 153;r 827 150 153;r 837 150 153;d 847 156 171;d 858 162 180;r 868 162 174;d 878 162 174;r 888 170 176;r 898 162 186;d 909 153 156;d 919 138 154;r 929 144 159;d 939 147 153;r 948 153 165;d 958 146 157;r 969 145 157;r 980 147 171;r 990 180 183;r 999 189 201;d 1009 195 198;r 1020 203 207;d 1031 177 210;d 1041 168 177;d 1052 156 159;d 1062 156 159;d 1071 156 159` }
];
const layer = document.getElementById('candles');
function bar(x, y, w, h, fill) {
  const rect = document.createElementNS('http://www.w3.org/2000/svg', 'rect');
  Object.entries({ x, y, width: w, height: Math.max(1, h), fill }).forEach(([k, v]) => rect.setAttribute(k, v));
  layer.append(rect);
}
for (const block of blocks) {
  for (const entry of block.data.split(/[;\n]/)) {
    const [code, ...values] = entry.split(' ');
    const [x, top, bottom, high, low] = values.map(Number);
    const py = v => Math.round(block.y + v / 3);
    if (top) {
      const left = Math.round(block.x + (x - 4) / 3);
      const right = Math.round(block.x + (x + 4) / 3);
      bar(left, py(top), right - left, py(bottom) - py(top), colours[code]);
    }
    if (high !== undefined) bar(Math.floor(block.x + x / 3), py(high), 1, py(low) - py(high), colours[code]);
  }
}
```
